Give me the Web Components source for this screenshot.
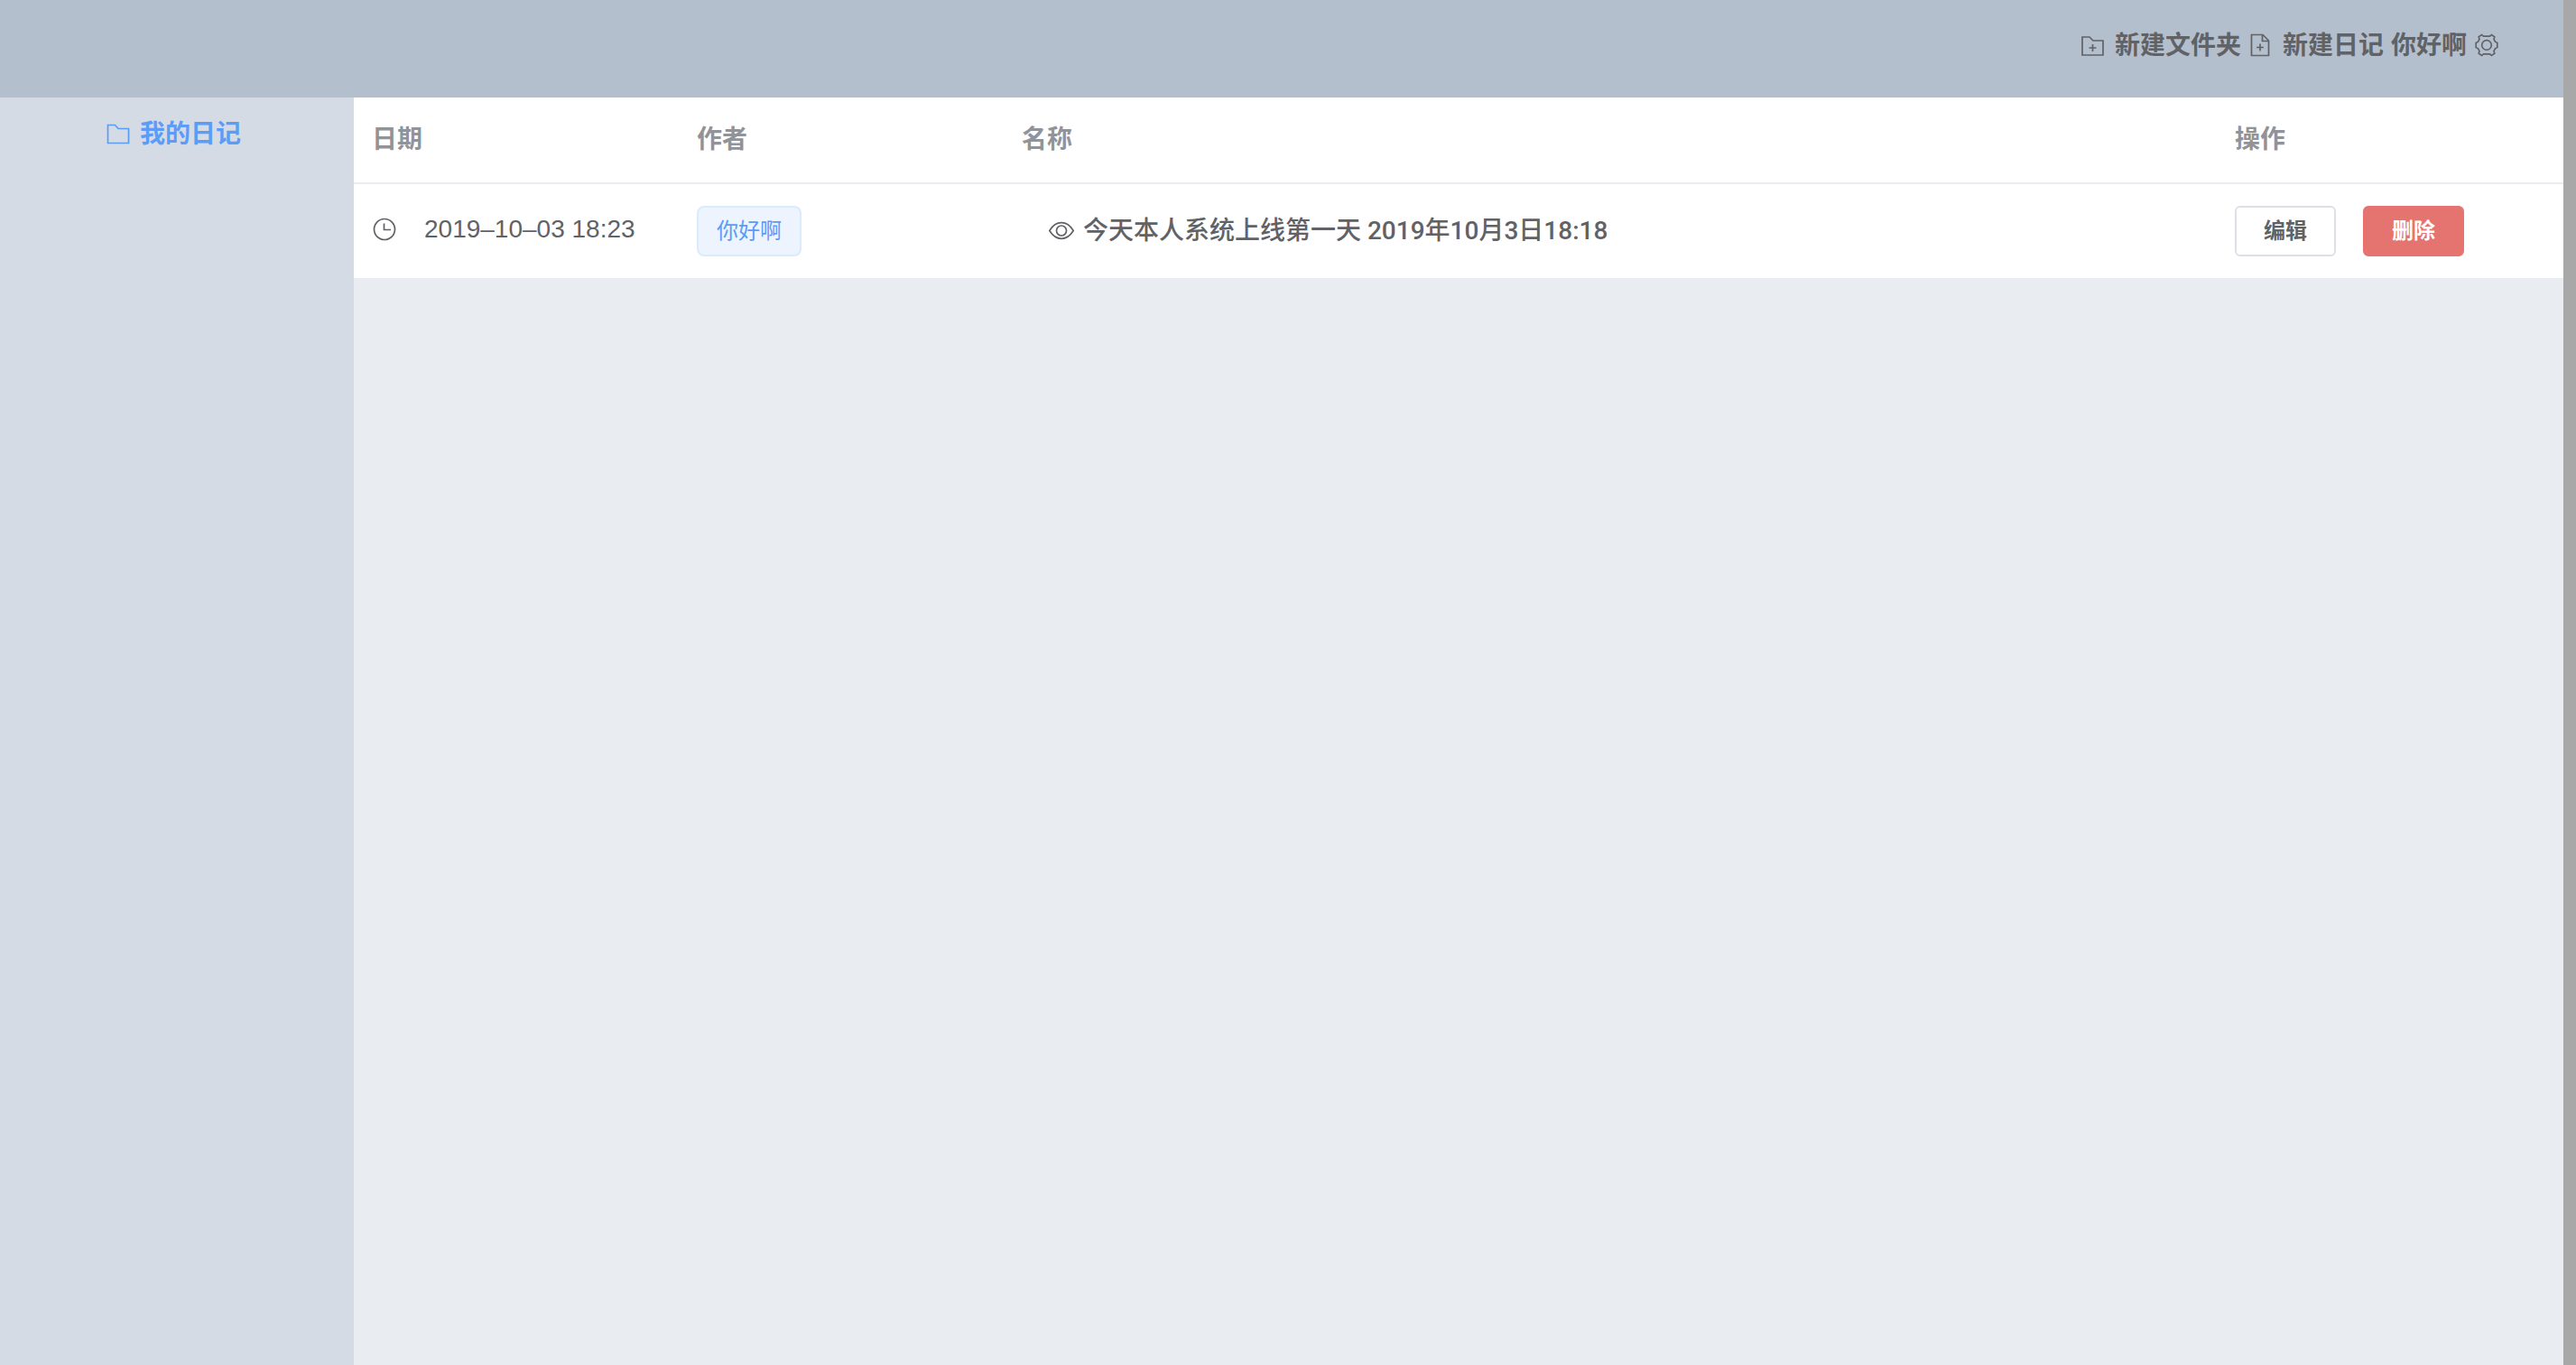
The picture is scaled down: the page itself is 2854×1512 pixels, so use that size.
<!DOCTYPE html>
<html lang="zh-CN">
<head>
<meta charset="utf-8">
<title>我的日记</title>
<style>
  html, body { margin: 0; height: 100%; }
  body {
    font: 600 28px/46px "Liberation Sans", "Noto Sans CJK SC", sans-serif;
    color: #606266;
    background: #e9ecf1;
  }
</style>
</head>
<body>
<diary-app>
  <diary-header slot="header">
    <icon-link icon="folder-add">新建文件夹</icon-link>
    <icon-link icon="document-add">新建日记</icon-link>
    <user-menu>你好啊</user-menu>
  </diary-header>
  <diary-sidebar slot="aside">
    <icon-link icon="folder">我的日记</icon-link>
  </diary-sidebar>
  <diary-table></diary-table>
</diary-app>

<script>
  const ICONS = {
    'folder-add': '<path d="M2 24V4H10L14 8H25V24Z M13.500 12V20M9.500 16H17.500"/>',
    'folder': '<path d="M2.500 23.500V3.500H10.500L14 7.500H25.500V23.500Z"/>',
    'document-add': '<path d="M3.500 1.500H16L22.500 8V24.500H3.500Z M15.500 1.500V8.500H22.500 M13 11.500V19.500M9 15.500H17"/>',
    'setting': '<circle cx="14" cy="13" r="5.300"/><path d="M10.500 3.200H17.500L19.500 1.600L22.800 3.800L22 6.500L23.500 9.200L25.800 10.500V15.500L23.500 16.800L22 19.500L22.800 22.200L19.500 24.400L17.500 22.800H10.500L8.500 24.400L5.200 22.200L6 19.500L4.500 16.800L2.200 15.500V10.500L4.500 9.200L6 6.500L5.200 3.800L8.500 1.600Z"/>',
    'time': '<circle cx="14" cy="14" r="11.500"/><path d="M13.500 7.500V14.500H21"/>',
    'view': '<path d="M.8 13.500C4.500 7.500 9 4.700 14 4.700S23.500 7.500 27.200 13.500C23.500 19.500 19 22.300 14 22.300S4.500 19.500 .8 13.500Z"/><circle cx="14" cy="13.500" r="5.500"/>'
  };

  class BaseElement extends HTMLElement {
    render(css, html) {
      this.attachShadow({ mode: 'open' }).innerHTML =
        '<style>:host,*{box-sizing:border-box}' + css + '</style>' + html;
    }
  }

  customElements.define('ui-icon', class extends BaseElement {
    connectedCallback() {
      this.render(
        ':host{display:block;flex:none;width:28px;height:28px}' +
        'svg{display:block;width:100%;height:100%;fill:none;stroke:currentColor;stroke-width:1.700}',
        '<svg viewBox="0 0 28 28" aria-hidden="true">' + ICONS[this.getAttribute('name')] + '</svg>');
    }
  });

  customElements.define('icon-link', class extends BaseElement {
    connectedCallback() {
      this.render(
        ':host{display:block}' +
        'a{display:flex;align-items:center;gap:10px;color:inherit;text-decoration:none}',
        '<a href="#"><ui-icon name="' + this.getAttribute('icon') + '"></ui-icon><span><slot></slot></span></a>');
    }
  });

  customElements.define('user-menu', class extends BaseElement {
    connectedCallback() {
      this.render(
        ':host{display:block}' +
        'button{display:flex;align-items:center;gap:8px;padding:0;border:0;background:none;font:inherit;color:inherit;cursor:pointer}',
        '<button type="button"><span><slot></slot></span><ui-icon name="setting"></ui-icon></button>');
    }
  });

  customElements.define('ui-tag', class extends BaseElement {
    connectedCallback() {
      this.render(
        ':host{display:inline-block;vertical-align:top;height:56px;padding:0 20px;border:2px solid #dbeafd;border-radius:8px;' +
        'background:#edf4fe;color:#5a9cf8;font-size:24px;line-height:52px;font-weight:400}',
        '<slot></slot>');
    }
  });

  customElements.define('ui-button', class extends BaseElement {
    connectedCallback() {
      this.render(
        ':host{display:block}' +
        'button{display:block;height:56px;padding:0 30px;border:2px solid #dcdfe6;border-radius:6px;' +
        'background:#fff;color:#606266;font:inherit;font-size:24px;line-height:52px;cursor:pointer}' +
        ':host([type=danger]) button{background:#e57470;border-color:#e57470;color:#fff}',
        '<button type="button"><slot></slot></button>');
    }
  });

  customElements.define('diary-header', class extends BaseElement {
    connectedCallback() {
      this.render(
        ':host{display:flex;align-items:center;justify-content:flex-end;gap:8px;height:108px;padding:0 71px 6px;background:#b4bfce}',
        '<slot></slot>');
    }
  });

  customElements.define('diary-sidebar', class extends BaseElement {
    connectedCallback() {
      this.render(
        ':host{display:block;background:#d5dbe5;color:#5a9cf8;height:100%}' +
        'nav{display:flex;flex-direction:column;align-items:center;padding:18px 8px 18px 0}',
        '<nav><slot></slot></nav>');
    }
  });

  customElements.define('diary-table', class extends BaseElement {
    connectedCallback() {
      this.render(
        ':host{display:block}' +
        'table{width:100%;table-layout:fixed;border-spacing:0;background:#fff}' +
        '.side{width:360px}.ops{width:384px}' +
        'th{padding:24px 20px;height:96px;border-bottom:2px solid #e9ecf1;color:#909399;text-align:left;font-weight:700}' +
        'td{padding:24px 20px}' +
        '.date,.actions{display:flex;align-items:center;gap:30px}' +
        '.date{font-weight:400;padding-bottom:4px}' +
        '.name{display:block;padding-left:30px;font-family:Roboto,"Noto Sans CJK SC",sans-serif;font-weight:500}',
        '<table><colgroup><col class="side"><col class="side"><col><col class="ops"></colgroup>' +
        '<thead><tr><th>日期</th><th>作者</th><th>名称</th><th>操作</th></tr></thead>' +
        '<tbody><tr>' +
        '<td><div class="date"><ui-icon name="time"></ui-icon><time datetime="2019-10-03T18:23">2019–10–03 18:23</time></div></td>' +
        '<td><ui-tag>你好啊</ui-tag></td>' +
        '<td><icon-link class="name" icon="view">今天本人系统上线第一天 2019年10月3日18:18</icon-link></td>' +
        '<td><div class="actions"><ui-button>编辑</ui-button><ui-button type="danger">删除</ui-button></div></td>' +
        '</tr></tbody></table>');
    }
  });

  customElements.define('diary-app', class extends BaseElement {
    connectedCallback() {
      this.render(
        ':host{display:flex;flex-direction:column;min-height:100vh;border-right:14px solid #a8a8a8}' +
        '.body{display:flex;flex:1}' +
        'aside{flex:none;width:392px;display:grid}' +
        'main{flex:1;min-width:0}',
        '<slot name="header"></slot><div class="body"><aside><slot name="aside"></slot></aside><main><slot></slot></main></div>');
    }
  });
</script>
</body>
</html>
